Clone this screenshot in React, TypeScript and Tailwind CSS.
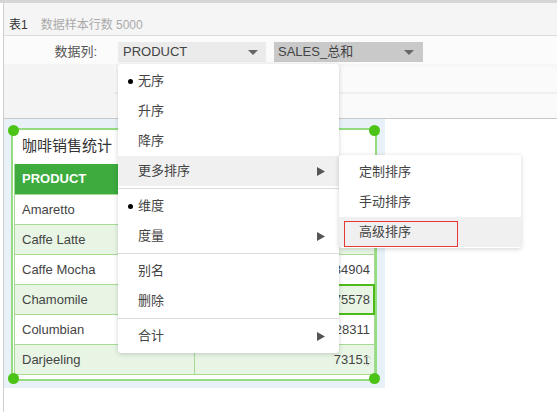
import React from "react";

const rows = [
  { name: "Amaretto", value: "" },
  { name: "Caffe Latte", value: "" },
  { name: "Caffe Mocha", value: "34904" },
  { name: "Chamomile", value: "75578", selected: true },
  { name: "Columbian", value: "28311" },
  { name: "Darjeeling", value: "73151", scroll: true },
];

function DownTri() {
  return (
    <svg width="10" height="5" viewBox="0 0 10 5">
      <polygon points="0,0 10,0 5,5" fill="#666" />
    </svg>
  );
}

function RightTri() {
  return (
    <svg width="8" height="9" viewBox="0 0 8 9">
      <polygon points="0,0 8,4.5 0,9" fill="#555" />
    </svg>
  );
}

function Dot({ pos }: { pos: string }) {
  return <div className={`absolute h-[11px] w-[11px] rounded-full bg-[#4cc417] ${pos}`} />;
}

function MenuItem({
  label,
  bullet,
  arrow,
  hover,
}: {
  label: string;
  bullet?: boolean;
  arrow?: boolean;
  hover?: boolean;
}) {
  return (
    <div className={`relative flex h-[30px] items-center pl-[20px] pr-[14px] ${hover ? "bg-[#f0f0f0]" : ""}`}>
      {bullet && <span className="absolute left-[10px] top-[13px] h-[5px] w-[5px] rounded-full bg-black" />}
      <span className="flex-1">{label}</span>
      {arrow && <RightTri />}
    </div>
  );
}

export default function App() {
  return (
    <div
      className="relative h-[412px] w-[557px] overflow-hidden bg-white text-[13px] text-[#444]"
      style={{ fontFamily: '"Liberation Sans", "Noto Sans CJK SC", sans-serif' }}
    >
      <div className="h-[3px] bg-[#d6d6d6]" />
      <div className="ml-[3px] flex h-[409px] flex-col border-l border-[#cfcfcf]">
        {/* sheet info */}
        <div className="flex h-[33px] items-start border-b border-[#dcdcdc] bg-[#f5f5f5] pl-[5px] pt-[12px] text-[12px] leading-[20px]">
          <span className="text-[#333]">表1</span>
          <span className="ml-[13px] text-[#aaa]">数据样本行数 5000</span>
        </div>
        {/* data columns */}
        <div className="flex h-[28px] items-start bg-[#fbfbfb] pt-[6px]">
          <div className="w-[93px] text-right leading-[20px] text-[#555]">数据列:</div>
          <div className="ml-[21px] flex h-[20px] w-[148px] items-center justify-between bg-[#ebebeb] pl-[5px] pr-[8px]">
            <span>PRODUCT</span>
            <DownTri />
          </div>
          <div className="ml-[8px] flex h-[20px] w-[149px] items-center justify-between bg-[#c9c9c9] pl-[4px] pr-[9px]">
            <span>SALES_总和</span>
            <DownTri />
          </div>
        </div>
        {/* settings bands */}
        <div className="flex h-[55px] border-b border-[#c8c8c8] bg-[#f4f4f4]">
          <div className="w-[110px]" />
          <div className="flex flex-1 flex-col bg-[#f6f6f6] pt-[3px]">
            <div className="h-[25px] bg-[#fafafa]" />
            <div className="h-[2px] bg-[#f0f0f0]" />
            <div className="h-[24px] bg-[#fafafa]" />
          </div>
        </div>
        {/* canvas */}
        <div className="h-[269px] w-[381px] bg-[#e8f0f8] pl-[7px] pt-[9px]">
          <div className="relative h-[253px] w-[366px] border-2 border-[#95dc80] bg-white">
            <Dot pos="left-[-5px] top-[-5px]" />
            <Dot pos="right-[-5px] top-[-5px]" />
            <Dot pos="left-[-5px] bottom-[-5px]" />
            <Dot pos="right-[-5px] bottom-[-5px]" />
            <div className="h-[34px] pl-[9px] pt-[6px] text-[15px] leading-[20px] text-[#333]">咖啡销售统计</div>
            <div className="ml-[1px] w-[361px] border-x border-b border-[#a6db96]">
              <div className="flex h-[30px] items-center bg-[#3dab3d] pl-[7px] font-bold text-white">PRODUCT</div>
              {rows.map((r, i) => (
                <div
                  key={r.name}
                  className={`flex h-[30px] border-t border-[#a6db96] ${i % 2 === 1 ? "bg-[#e8f5e5]" : "bg-white"}`}
                >
                  <div className="flex w-[180px] items-center border-r border-[#a6db96] pl-[7px]">{r.name}</div>
                  <div className="relative flex flex-1 items-center justify-end pr-[4px]">
                    {r.value}
                    {r.selected && (
                      <div className="absolute inset-x-[-1px] bottom-[-1px] top-[-1px] border-2 border-[#4cbb17]" />
                    )}
                    {r.scroll && (
                      <div className="absolute right-[3px] top-[10px] flex flex-col gap-[3px]">
                        <svg width="7" height="4" viewBox="0 0 7 4">
                          <polyline points="0.5,3.5 3.5,0.5 6.5,3.5" fill="none" stroke="#bbb" />
                        </svg>
                        <svg width="7" height="4" viewBox="0 0 7 4">
                          <polyline points="0.5,0.5 3.5,3.5 6.5,0.5" fill="none" stroke="#bbb" />
                        </svg>
                      </div>
                    )}
                  </div>
                </div>
              ))}
            </div>
          </div>
        </div>
      </div>

      {/* context menu */}
      <div className="absolute left-[118px] top-[64px] w-[221px] rounded-[3px] bg-white text-[#444] shadow-[0_1px_5px_rgba(0,0,0,0.18)]">
        <div className="py-[2px]">
          <MenuItem label="无序" bullet />
          <MenuItem label="升序" />
          <MenuItem label="降序" />
          <MenuItem label="更多排序" arrow hover />
        </div>
        <div className="border-t border-[#dcdcdc] py-[2px]">
          <MenuItem label="维度" bullet />
          <MenuItem label="度量" arrow />
        </div>
        <div className="border-t border-[#dcdcdc] py-[2px]">
          <MenuItem label="别名" />
          <MenuItem label="删除" />
        </div>
        <div className="border-t border-[#dcdcdc] py-[2px]">
          <MenuItem label="合计" arrow />
        </div>
      </div>

      {/* submenu */}
      <div className="absolute left-[339px] top-[155px] w-[182px] rounded-[3px] bg-white pb-[1px] pt-[2px] text-[#444] shadow-[0_1px_5px_rgba(0,0,0,0.18)]">
        <div className="flex h-[30px] items-center pl-[20px]">定制排序</div>
        <div className="flex h-[30px] items-center pl-[20px]">手动排序</div>
        <div className="relative flex h-[30px] items-center bg-[#f0f0f0] pl-[20px]">
          高级排序
          <div className="absolute left-[5px] top-[4px] h-[26px] w-[114px] border border-[#e53935]" />
        </div>
      </div>
    </div>
  );
}
